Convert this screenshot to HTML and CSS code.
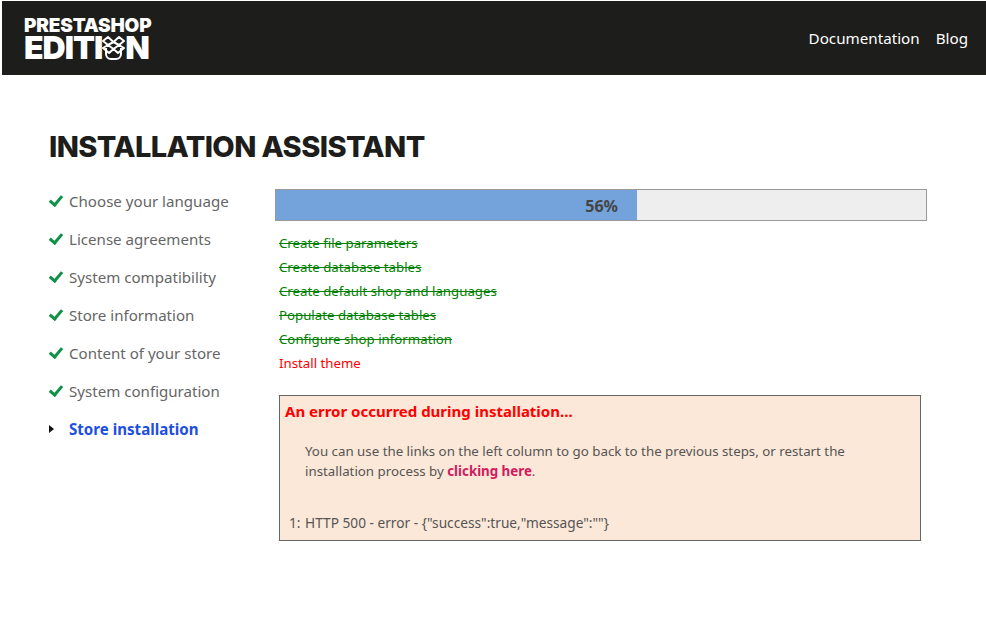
FILE: index.html
```html
<!DOCTYPE html>
<html lang="en">
<head>
    <meta charset="UTF-8">
    <meta name="viewport" content="width=device-width, initial-scale=1.0">
    <title>PrestaShop Edition Installation Assistant</title>
    <link rel="stylesheet" href="styles.css">
</head>
<body>
    <header class="header">
        <div class="logo">
            <div class="logo-top">PRESTASHOP</div>
            <div class="logo-bottom">
                <span>EDITI</span>
                <svg class="logo-box" width="23" height="25" viewBox="0 0 23 25" fill="none" stroke="#fff" stroke-width="2" stroke-linejoin="round">
                    <path d="M4 13v6a5 5 0 0 0 5 5h5a5 5 0 0 0 5-5v-6"/>
                    <path d="M11.500 7 6 2 1 6l5 4 5.500-3 5.500 3 5-4-5-4z"/>
                    <path d="M6 10l5.500 4 5.500-4M11.500 14 7 18l-6-5 5-3M11.500 14l4.500 4 6-5-5-3"/>
                </svg>
                <span>N</span>
            </div>
        </div>
        <nav class="nav">
            <a href="#">Documentation</a>
            <a href="#">Blog</a>
        </nav>
    </header>

    <main class="main">
        <h1>INSTALLATION ASSISTANT</h1>
        <div class="content">
            <ul class="steps">
                <li class="done">Choose your language</li>
                <li class="done">License agreements</li>
                <li class="done">System compatibility</li>
                <li class="done">Store information</li>
                <li class="done">Content of your store</li>
                <li class="done">System configuration</li>
                <li class="current">Store installation</li>
            </ul>
            <div class="install">
                <div class="progress">
                    <div class="progress-fill" style="width: 361px">56%</div>
                </div>
                <ul class="tasks">
                    <li class="ok">Create file parameters</li>
                    <li class="ok">Create database tables</li>
                    <li class="ok">Create default shop and languages</li>
                    <li class="ok">Populate database tables</li>
                    <li class="ok">Configure shop information</li>
                    <li class="fail">Install theme</li>
                </ul>
                <div class="error-box">
                    <h3>An error occurred during installation...</h3>
                    <p>You can use the links on the left column to go back to the previous steps, or restart the installation process by <a href="#">clicking here</a>.</p>
                    <ol>
                        <li>HTTP 500 - error - {"success":true,"message":""}</li>
                    </ol>
                </div>
            </div>
        </div>
    </main>
</body>
</html>
```

FILE: styles.css
```css
body {
    margin: 0;
    padding: 1px 0 0 2px;
    background: #ffffff;
    font-family: "Noto Sans", "Open Sans", sans-serif;
    color: #555555;
}
ul, ol {
    list-style: none;
    margin: 0;
    padding: 0;
}
.header {
    display: flex;
    justify-content: space-between;
    align-items: center;
    height: 74px;
    background: #1d1d1b;
    padding: 0 18px 0 22px;
}
.logo {
    color: #ffffff;
    font-family: Inter, sans-serif;
    font-weight: 900;
}
.logo-top {
    font-size: 19px;
    line-height: 17px;
    letter-spacing: -0.2px;
}
.logo-bottom {
    display: flex;
    align-items: center;
    height: 25px;
    margin-top: 1px;
    font-size: 32px;
    line-height: 25px;
    letter-spacing: -1px;
}
.logo-box {
    flex: none;
}
.nav {
    display: flex;
    gap: 16px;
}
.nav a {
    color: #ffffff;
    font-size: 15.200px;
    text-decoration: none;
}
.main {
    padding: 56px 0 0 47px;
}
h1 {
    margin: 0 0 26px;
    font-family: Inter, sans-serif;
    font-size: 29px;
    line-height: 32px;
    font-weight: 800;
    letter-spacing: -0.6px;
    color: #1d1d1b;
}
.content {
    display: flex;
}
.steps {
    width: 226px;
    flex: none;
}
.steps li {
    display: flex;
    align-items: center;
    height: 24px;
    margin-bottom: 14px;
    padding-left: 20px;
    font-size: 15.100px;
    color: #666666;
    position: relative;
}
.steps li.done::before {
    content: "";
    position: absolute;
    left: 3px;
    top: 4px;
    width: 5px;
    height: 10px;
    border: solid #0f9146;
    border-width: 0 3px 3px 0;
    transform: rotate(40deg);
}
.steps li.current {
    font-weight: 700;
    color: #1e4fe0;
}
.steps li.current::before {
    content: "";
    position: absolute;
    left: 0;
    top: 8px;
    border-style: solid;
    border-width: 4px 0 4px 5px;
    border-color: transparent transparent transparent #111111;
}
.install {
    width: 652px;
}
.progress {
    height: 30px;
    border: 1px solid #999999;
    background: #eeeeee;
}
.progress-fill {
    height: 30px;
    box-sizing: border-box;
    padding-right: 19px;
    background: #74a3dc;
    text-align: right;
    font-size: 16px;
    line-height: 32px;
    font-weight: 700;
    color: #444444;
}
.tasks {
    margin: 10px 0 20px 4px;
}
.tasks li {
    height: 24px;
    line-height: 24px;
    font-size: 13.250px;
}
.tasks .ok {
    color: #008000;
    text-decoration: line-through;
}
.tasks .fail {
    color: #ff0000;
}
.error-box {
    box-sizing: border-box;
    width: 642px;
    height: 146px;
    margin-left: 4px;
    padding: 5px;
    border: 1px solid #666666;
    background: #fbe8d8;
    font-size: 13.300px;
    color: #555555;
}
.error-box h3 {
    margin: 0;
    font-size: 15px;
    line-height: 20px;
    font-weight: 700;
    color: #ff0000;
}
.error-box p {
    margin: 20px 40px 0 20px;
    line-height: 20px;
}
.error-box a {
    color: #d11b5f;
    font-weight: 700;
    text-decoration: none;
}
.error-box ol {
    margin: 32px 0 0 20px;
    line-height: 20px;
    font-size: 13.700px;
}
.error-box li {
    position: relative;
}
.error-box li::before {
    content: "1:";
    position: absolute;
    left: -16px;
}
```
